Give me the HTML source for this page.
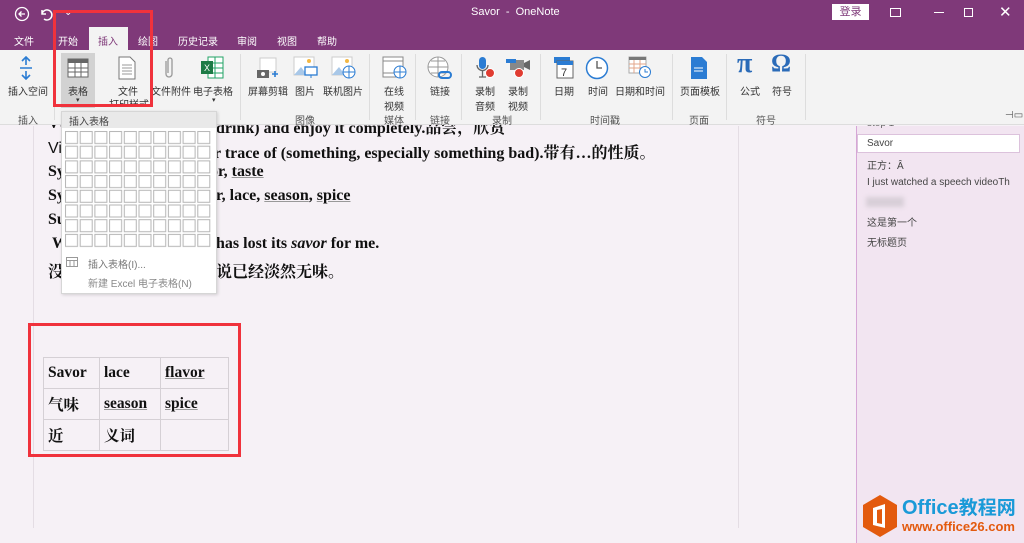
<!DOCTYPE html>
<html><head><meta charset="utf-8"><style>
*{margin:0;padding:0;box-sizing:border-box}
body{width:1024px;height:543px;overflow:hidden;position:relative;background:#f6f1f6;font-family:"Liberation Sans","Noto Sans CJK SC",sans-serif;}
.a{position:absolute;white-space:nowrap}
.w{color:#fff;font-size:10px}
.lbl{font-size:10px;color:#333;text-align:center;z-index:3}
.grp{font-size:10px;color:#555;z-index:3}
.sep{position:absolute;top:54px;width:1px;height:66px;background:#ddd;z-index:3}
.doc{font-family:"Liberation Serif","Noto Serif CJK SC",serif;font-weight:bold;font-size:16px;color:#111}
.u{text-decoration:underline;text-decoration-color:#999}
.ic{position:absolute;z-index:3}
</style></head><body>
<!-- content -->
<div class="a" style="left:33px;top:126px;width:1px;height:402px;background:#e4dde4"></div>
<div class="a" style="left:738px;top:126px;width:1px;height:402px;background:#e4dde4"></div>
<div class="a doc" style="left:48px;top:115px">Vt: to taste (food or</div>
<div class="a doc" style="left:216px;top:115px">drink) and enjoy it completely.品尝，欣赏</div>
<div class="a doc" style="left:48px;top:140px"><span style="font-weight:normal;font-family:'Liberation Sans'">Vi</span></div>
<div class="a doc" style="left:214px;top:140px">r trace of (something, especially something bad).带有…的性质。</div>
<div class="a doc" style="left:48px;top:163px">Sy</div>
<div class="a doc" style="left:210px;top:163px">or, <span class="u">taste</span></div>
<div class="a doc" style="left:48px;top:187px">Sy</div>
<div class="a doc" style="left:216px;top:187px">r, lace, <span class="u">season</span>, <span class="u">spice</span></div>
<div class="a doc" style="left:48px;top:211px">Su</div>
<div class="a doc" style="left:52px;top:235px">W</div>
<div class="a doc" style="left:216px;top:235px">has lost its <i>savor</i> for me.</div>
<div class="a doc" style="left:48px;top:259px">没</div>
<div class="a doc" style="left:216px;top:259px">说已经淡然无味。</div>
<!-- title -->
<div class="a" style="left:0;top:0;width:1024px;height:50px;background:#7f3979;z-index:2"></div>
<svg class="ic" style="left:14px;top:6px" width="16" height="16"><circle cx="8" cy="8" r="6.5" fill="none" stroke="#fff" stroke-width="1.3"/><path d="M11 8H5M7.5 5.5L5 8l2.5 2.5" stroke="#fff" stroke-width="1.3" fill="none"/></svg>
<svg class="ic" style="left:38px;top:6px" width="16" height="16"><path d="M4 4v4h4M4 8a5 5 0 1 1 2 5" stroke="#fff" stroke-width="1.5" fill="none"/></svg>
<div class="a w" style="left:64px;top:7px;z-index:3">⌄</div>
<div class="a w" style="left:471px;top:6px;font-size:11px;z-index:3">Savor&nbsp; - &nbsp;OneNote</div>
<div class="a" style="left:832px;top:4px;width:37px;height:16px;background:#fff;color:#7f3979;font-size:11px;text-align:center;line-height:16px;z-index:3">登录</div>
<div class="a" style="left:890px;top:8px;width:11px;height:9px;border:1.3px solid #fff;z-index:3"></div>
<div class="a" style="left:934px;top:12px;width:10px;height:1.3px;background:#fff;z-index:3"></div>
<div class="a" style="left:964px;top:8px;width:9px;height:9px;border:1.3px solid #fff;z-index:3"></div>
<div class="a w" style="left:999px;top:3px;font-size:15px;z-index:3">✕</div>
<!-- tabs -->
<div class="a" style="left:89px;top:27px;width:39px;height:23px;background:#f3f3f3;z-index:3"></div>
<div class="a w" style="left:14px;top:33px;z-index:3">文件</div>
<div class="a w" style="left:58px;top:33px;z-index:3">开始</div>
<div class="a" style="left:98px;top:33px;font-size:10px;color:#7f3979;z-index:3">插入</div>
<div class="a w" style="left:138px;top:33px;z-index:3">绘图</div>
<div class="a w" style="left:178px;top:33px;z-index:3">历史记录</div>
<div class="a w" style="left:237px;top:33px;z-index:3">审阅</div>
<div class="a w" style="left:277px;top:33px;z-index:3">视图</div>
<div class="a w" style="left:317px;top:33px;z-index:3">帮助</div>
<!-- ribbon -->
<div class="a" style="left:0;top:50px;width:1024px;height:75px;background:#f3f3f3;border-bottom:1px solid #ddd;z-index:2"></div>
<div class="a" style="left:61px;top:53px;width:34px;height:55px;background:#d2d2d2;z-index:3"></div>
<svg class="ic" style="left:18px;top:56px" width="16" height="24"><path d="M8 1v8M8 15v8M4 5l4-4 4 4M4 19l4 4 4-4M2 12h12" stroke="#2b7cd3" stroke-width="1.6" fill="none"/></svg>
<svg class="ic" style="left:67px;top:58px" width="22" height="20"><rect x="1" y="1" width="20" height="18" fill="#fff" stroke="#666"/><rect x="1" y="1" width="20" height="4" fill="#666"/><path d="M1 10h20M1 14h20M8 5v14M14 5v14" stroke="#666"/></svg>
<svg class="ic" style="left:118px;top:56px" width="18" height="24"><path d="M1 1h11l5 5v17H1z" fill="#fff" stroke="#777"/><path d="M4 9h10M4 12h10M4 15h10M4 18h10" stroke="#999"/></svg>
<svg class="ic" style="left:163px;top:56px" width="12" height="24"><path d="M3 5v13a3 3 0 0 0 6 0V4a2 2 0 0 0-4 0v13" stroke="#999" stroke-width="1.3" fill="none"/></svg>
<svg class="ic" style="left:200px;top:56px" width="24" height="24"><rect x="8" y="1" width="15" height="21" fill="#fff" stroke="#21a366"/><path d="M8 7h15M8 12h15M8 17h15M15 1v21" stroke="#21a366"/><rect x="1" y="5" width="12" height="13" fill="#1d7a45"/><text x="4" y="15" font-size="9" fill="#fff" font-family="Liberation Sans">X</text></svg>
<svg class="ic" style="left:255px;top:57px" width="24" height="24"><rect x="5" y="1" width="16" height="14" fill="#fff" stroke="#ccc"/><rect x="2" y="13" width="12" height="8" fill="#666"/><circle cx="8" cy="17" r="2" fill="#fff"/><path d="M17 17h6M20 14v6" stroke="#2b7cd3" stroke-width="1.6"/></svg>
<svg class="ic" style="left:293px;top:56px" width="26" height="24"><rect x="1" y="1" width="20" height="18" fill="#fff" stroke="#ccc"/><path d="M1 19l7-8 6 8z" fill="#a9c8e8"/><circle cx="16" cy="5" r="2" fill="#f3b844"/><rect x="12" y="11" width="12" height="8" fill="#fff" stroke="#2b7cd3" stroke-width="1.3"/><path d="M18 19v3" stroke="#2b7cd3"/></svg>
<svg class="ic" style="left:331px;top:56px" width="26" height="24"><rect x="1" y="1" width="20" height="18" fill="#fff" stroke="#ccc"/><path d="M1 19l7-8 6 8z" fill="#a9c8e8"/><circle cx="16" cy="5" r="2" fill="#f3b844"/><circle cx="18" cy="16" r="6" fill="#fff" stroke="#2b7cd3"/><path d="M12 16h12M18 10v12" stroke="#2b7cd3"/></svg>
<svg class="ic" style="left:382px;top:56px" width="26" height="24"><rect x="1" y="1" width="20" height="20" fill="#fff" stroke="#888"/><path d="M1 5h20M1 17h20" stroke="#888"/><circle cx="18" cy="16" r="6" fill="#fff" stroke="#2b7cd3"/><path d="M12 16h12M18 10v12" stroke="#2b7cd3"/></svg>
<svg class="ic" style="left:427px;top:56px" width="26" height="26"><circle cx="11" cy="11" r="10" fill="#fff" stroke="#999"/><path d="M1 11h20M11 1v20M4 5h14M4 17h14" stroke="#999"/><rect x="12" y="16" width="12" height="6" rx="3" fill="none" stroke="#2b7cd3" stroke-width="2"/></svg>
<svg class="ic" style="left:474px;top:56px" width="22" height="24"><rect x="5" y="1" width="7" height="12" rx="3.5" fill="#2b7cd3"/><path d="M3 9a5.5 5.5 0 0 0 11 0M8.5 15v6M5 21h7" stroke="#666" stroke-width="1.3" fill="none"/><circle cx="16" cy="17" r="4.5" fill="#e03c31" stroke="#fff"/></svg>
<svg class="ic" style="left:505px;top:56px" width="26" height="24"><rect x="5" y="4" width="14" height="10" fill="#888"/><path d="M19 7l6-3v10l-6-3z" fill="#666"/><rect x="1" y="3" width="10" height="4" fill="#2b7cd3"/><circle cx="14" cy="17" r="4.5" fill="#e03c31" stroke="#fff"/></svg>
<svg class="ic" style="left:553px;top:56px" width="22" height="24"><rect x="1" y="1" width="16" height="6" fill="#2b7cd3"/><rect x="4" y="5" width="16" height="17" fill="#fff" stroke="#666"/><rect x="4" y="5" width="16" height="4" fill="#2b7cd3"/><text x="8" y="20" font-size="11" fill="#333" font-family="Liberation Sans">7</text></svg>
<svg class="ic" style="left:585px;top:56px" width="24" height="24"><circle cx="12" cy="12" r="10.5" fill="#fff" stroke="#2b7cd3" stroke-width="1.5"/><path d="M12 5v7h5" stroke="#555" stroke-width="1.3" fill="none"/></svg>
<svg class="ic" style="left:628px;top:56px" width="24" height="24"><rect x="1" y="1" width="17" height="16" fill="#fff" stroke="#aaa"/><rect x="1" y="1" width="17" height="3" fill="#777"/><path d="M1 8h17M1 12h17M6 4v13M12 4v13" stroke="#e3a68a"/><circle cx="17" cy="16" r="5.5" fill="#fff" stroke="#2b7cd3"/><path d="M17 13v3h3" stroke="#2b7cd3" fill="none"/></svg>
<svg class="ic" style="left:690px;top:56px" width="18" height="24"><path d="M1 1h11l5 5v17H1z" fill="#2b7cd3"/><path d="M4 12h9M4 15h9" stroke="#fff"/></svg>
<div class="a" style="left:737px;top:48px;font-family:'Liberation Serif',serif;font-size:28px;color:#2b6bb8;font-weight:bold;z-index:3">π</div>
<div class="a" style="left:771px;top:50px;font-family:'Liberation Serif',serif;font-size:25px;color:#2b6bb8;font-weight:bold;z-index:3">Ω</div>
<div class="a lbl" style="left:8px;top:83px">插入空间</div>
<div class="a lbl" style="left:68px;top:83px">表格</div>
<div class="a lbl" style="left:76px;top:96px;font-size:7px">▾</div>
<div class="a lbl" style="left:118px;top:83px">文件</div>
<div class="a lbl" style="left:109px;top:96px;height:10px;overflow:hidden">打印样式</div>
<div class="a lbl" style="left:151px;top:83px">文件附件</div>
<div class="a lbl" style="left:193px;top:83px">电子表格</div>
<div class="a lbl" style="left:212px;top:96px;font-size:7px">▾</div>
<div class="a lbl" style="left:248px;top:83px">屏幕剪辑</div>
<div class="a lbl" style="left:295px;top:83px">图片</div>
<div class="a lbl" style="left:323px;top:83px">联机图片</div>
<div class="a lbl" style="left:384px;top:83px">在线<br>视频</div>
<div class="a lbl" style="left:430px;top:83px">链接</div>
<div class="a lbl" style="left:475px;top:83px">录制<br>音频</div>
<div class="a lbl" style="left:508px;top:83px">录制<br>视频</div>
<div class="a lbl" style="left:554px;top:83px">日期</div>
<div class="a lbl" style="left:588px;top:83px">时间</div>
<div class="a lbl" style="left:615px;top:83px">日期和时间</div>
<div class="a lbl" style="left:680px;top:83px">页面模板</div>
<div class="a lbl" style="left:740px;top:83px">公式</div>
<div class="a lbl" style="left:772px;top:83px">符号</div>
<div class="a grp" style="left:18px;top:112px">插入</div>
<div class="a grp" style="left:295px;top:112px">图像</div>
<div class="a grp" style="left:384px;top:112px">媒体</div>
<div class="a grp" style="left:430px;top:112px">链接</div>
<div class="a grp" style="left:492px;top:112px">录制</div>
<div class="a grp" style="left:590px;top:112px">时间戳</div>
<div class="a grp" style="left:689px;top:112px">页面</div>
<div class="a grp" style="left:756px;top:112px">符号</div>
<div class="a grp" style="left:1005px;top:110px">⊣▭</div>
<div class="sep" style="left:54px"></div><div class="sep" style="left:240px"></div><div class="sep" style="left:369px"></div><div class="sep" style="left:415px"></div><div class="sep" style="left:461px"></div><div class="sep" style="left:540px"></div><div class="sep" style="left:672px"></div><div class="sep" style="left:726px"></div><div class="sep" style="left:805px"></div>
<!-- dropdown -->
<div class="a" style="left:61px;top:111px;width:156px;height:183px;background:#fff;border:1px solid #d6d6d6;box-shadow:1px 1px 3px rgba(0,0,0,.15);z-index:4"></div>
<div class="a" style="left:62px;top:112px;width:154px;height:16px;background:#e9e9e9;z-index:4"></div>
<div class="a" style="left:69px;top:113px;font-size:10px;color:#444;z-index:4">插入表格</div>
<svg class="ic" style="left:64px;top:130px;z-index:4" width="150" height="120">
<defs><pattern id="p" width="14.7" height="14.7" patternUnits="userSpaceOnUse"><rect x="1.5" y="1.5" width="12" height="12" fill="#fff" stroke="#b5b5b5"/></pattern></defs>
<rect x="0" y="0" width="147" height="117.6" fill="url(#p)"/>
</svg>
<svg class="ic" style="left:66px;top:257px;z-index:4" width="12" height="10"><rect x=".5" y=".5" width="11" height="9" fill="#fff" stroke="#999"/><path d="M.5 3.5h11M4 3.5v6M8 3.5v6" stroke="#999"/></svg>
<div class="a" style="left:88px;top:256px;font-size:10px;color:#777;z-index:4">插入表格(I)...</div>
<div class="a" style="left:88px;top:275px;font-size:10px;color:#888;z-index:4">新建 Excel 电子表格(N)</div>
<!-- table -->
<table class="a doc" style="left:43px;top:357px;border-collapse:collapse;font-size:15.5px">
<tr style="height:31px"><td style="width:56px;border:1px solid #d5d0d5;padding-left:4px">Savor</td><td style="width:61px;border:1px solid #d5d0d5;padding-left:4px">lace</td><td style="width:68px;border:1px solid #d5d0d5;padding-left:4px"><span class="u">flavor</span></td></tr>
<tr style="height:31px"><td style="border:1px solid #d5d0d5;padding-left:4px">气味</td><td style="border:1px solid #d5d0d5;padding-left:4px"><span class="u">season</span></td><td style="border:1px solid #d5d0d5;padding-left:4px"><span class="u">spice</span></td></tr>
<tr style="height:31px"><td style="border:1px solid #d5d0d5;padding-left:4px">近</td><td style="border:1px solid #d5d0d5;padding-left:4px">义词</td><td style="border:1px solid #d5d0d5"></td></tr>
</table>
<!-- right panel -->
<div class="a" style="left:856px;top:126px;width:168px;height:417px;background:#f2e5f1;border-left:1px solid #d6a6d6"></div>
<div class="a" style="left:867px;top:118px;font-size:10px;color:#666">step 1</div>
<div class="a" style="left:857px;top:134px;width:163px;height:19px;background:#fff;border:1px solid #dcc2dc"></div>
<div class="a" style="left:867px;top:138px;font-size:10px;color:#444">Savor</div>
<div class="a" style="left:867px;top:157px;font-size:10px;color:#444">正方：Â</div>
<div class="a" style="left:867px;top:177px;font-size:10px;color:#444">I just watched a speech videoTh</div>
<div class="a" style="left:866px;top:197px;width:38px;height:10px;background:#d8cfd8;filter:blur(2px)"></div>
<div class="a" style="left:867px;top:214px;font-size:10px;color:#444">这是第一个</div>
<div class="a" style="left:867px;top:234px;font-size:10px;color:#444">无标题页</div>
<!-- red boxes -->
<div class="a" style="left:53px;top:10px;width:100px;height:97px;border:3px solid #f0323c;z-index:5"></div>
<div class="a" style="left:28px;top:323px;width:213px;height:134px;border:3px solid #f0323c"></div>
<!-- logo -->
<svg class="ic" style="left:861px;top:494px" width="38" height="44"><path d="M19 1l17 10v22L19 43 2 33V11z" fill="#e35a0e"/><path d="M12 14l12-4v24l-12-3z" fill="#fff"/><path d="M16 16l5-1v15l-5-1z" fill="#e35a0e"/></svg>
<div class="a" style="left:902px;top:493px;font-size:20px;font-weight:bold;color:#1a9ad8">Office<span style="font-size:19px">教程网</span></div>
<div class="a" style="left:902px;top:519px;font-size:13px;font-weight:bold;color:#e35a0e">www.office26.com</div>
</body></html>
